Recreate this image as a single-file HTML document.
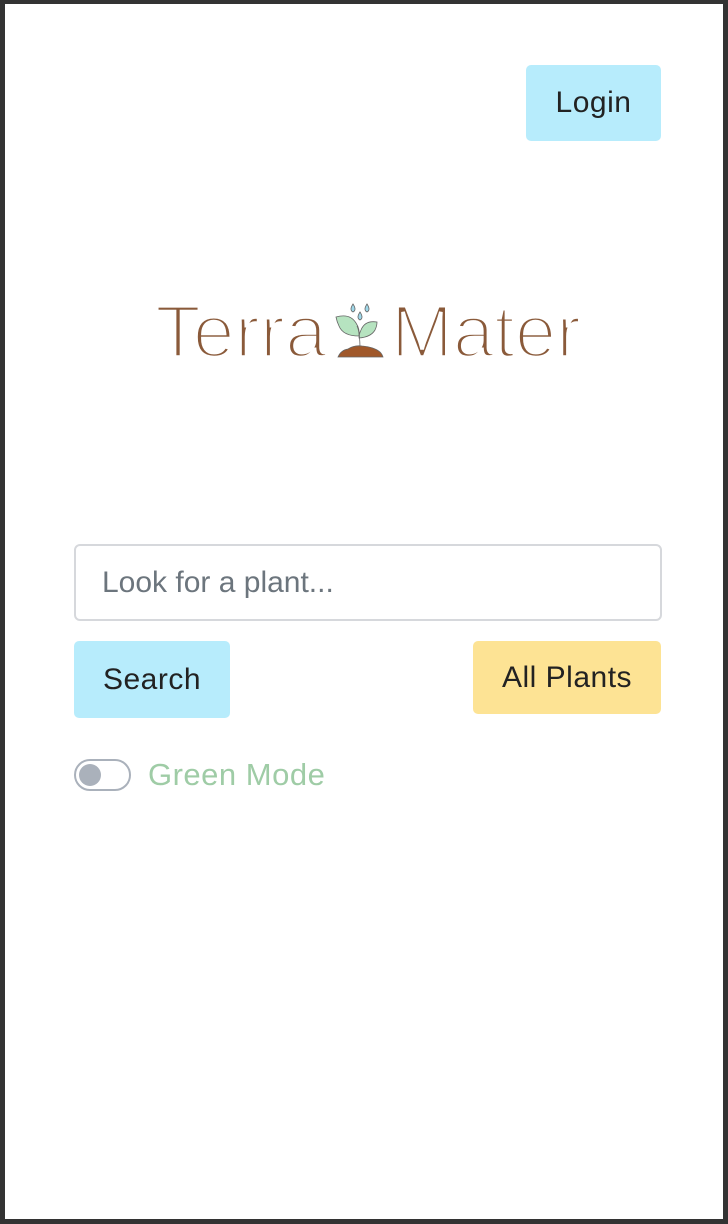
<!DOCTYPE html>
<html><head><meta charset="utf-8"><style>
html,body{margin:0;padding:0}
body{width:728px;height:1224px;background:#333;position:relative;overflow:hidden;font-family:"Liberation Sans",sans-serif}
.page{position:absolute;left:5px;top:4px;width:718px;height:1215px;background:#fff}
.btn{position:absolute;border-radius:5px;color:#222;font-size:30px;letter-spacing:0.5px;display:flex;align-items:center;justify-content:center}
</style></head><body>
<div class="page"></div>
<div class="btn" style="left:526px;top:65px;width:135px;height:76px;background:#b7ecfc">Login</div>
<svg style="position:absolute;left:150px;top:290px" width="440" height="80">
<text x="5" y="67" font-size="74" fill="#8a5a3a" font-family="Liberation Sans" textLength="172" lengthAdjust="spacingAndGlyphs" stroke="#fff" stroke-width="3.6">Terra</text>
<text x="241" y="67" font-size="74" fill="#8a5a3a" font-family="Liberation Sans" textLength="190" lengthAdjust="spacingAndGlyphs" stroke="#fff" stroke-width="3.6">Mater</text>
<g stroke="#666" stroke-width="0.8">
<path d="M203 14 q-4 6 0 8 q4 -2 0 -8z M217 14 q-4 6 0 8 q4 -2 0 -8z M210 22 q-4 6 0 8 q4 -2 0 -8z" fill="#9fd8ea"/>
<path d="M186 27 q14 -4 20 6 q4 6 3 13 q-16 0 -20 -10 q-2 -4 -3 -9z" fill="#b6e3c0"/>
<path d="M227 32 q-12 -2 -16 8 q-2 4 -2 8 q12 -1 16 -8 q2 -4 2 -8z" fill="#b6e3c0"/>
<path d="M207 36 q3 6 3 24" fill="none"/>
<path d="M188 67 q3 -7 10 -8 q6 -4 14 -3 q12 1 18 6 q2 2 3 5z" fill="#a0582a"/>
</g>
</svg>
<div style="position:absolute;left:74px;top:544px;border:2px solid #d6d8dc;border-radius:6px;font-size:30px;color:#6c757d;line-height:73px;padding-left:26px;box-sizing:border-box;width:588px;height:77px">Look for a plant...</div>
<div class="btn" style="left:74px;top:641px;width:156px;height:77px;background:#b7ecfc">Search</div>
<div class="btn" style="left:473px;top:641px;width:188px;height:73px;background:#fde394">All Plants</div>
<div style="position:absolute;left:74px;top:759px;width:53px;height:28px;border:2px solid #aab1bb;border-radius:16px"></div>
<div style="position:absolute;left:79px;top:764px;width:22px;height:22px;border-radius:50%;background:#aab1bb"></div>
<div style="position:absolute;left:148px;top:757px;font-size:31px;letter-spacing:0.5px;color:#9fcca6">Green Mode</div>
</body></html>
